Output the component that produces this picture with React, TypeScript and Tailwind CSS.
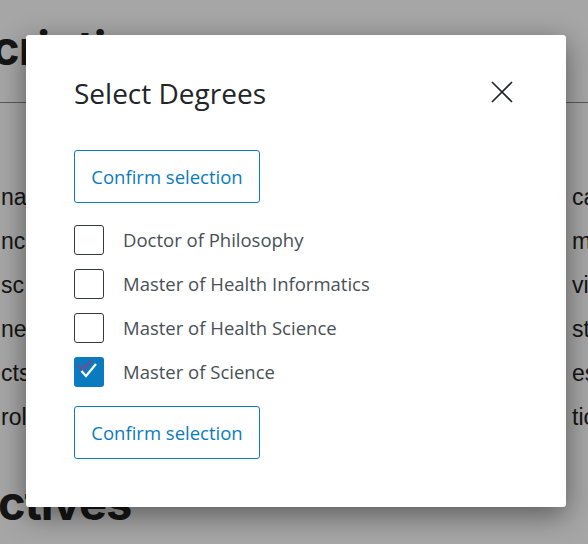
import { useState } from "react";

const degrees = [
  "Doctor of Philosophy",
  "Master of Health Informatics",
  "Master of Health Science",
  "Master of Science",
];

const bgLines = [
  ["nar", "ca"],
  ["nc", "m"],
  ["sc", "vi"],
  ["ner", "ste"],
  ["cts", "es"],
  ["rol", "tio"],
];

const CheckBox = ({ checked }: { checked: boolean }) => {
  if (!checked) {
    return <span className="block h-[30px] w-[30px] shrink-0 rounded-[3px] border border-[#343a40] bg-white" />;
  }
  return (
    <span className="flex h-[30px] w-[30px] shrink-0 items-center justify-center rounded-[3px] bg-[#0b7bc0]">
      <svg width="30" height="30" viewBox="0 0 30 30" fill="none">
        <path d="M4 8l4.5 4.5L18 3.5" stroke="#6a4f95" strokeWidth="2.6" />
        <path d="M7.5 14l4.5 5 10-12" stroke="#fff" strokeWidth="2.2" />
      </svg>
    </span>
  );
};

export default function App() {
  const [picked, setPicked] = useState<string[]>(["Master of Science"]);

  const toggle = (d: string) =>
    setPicked((p) => (p.includes(d) ? p.filter((x) => x !== d) : [...p, d]));

  const ConfirmButton = () => (
    <button className="h-[53px] w-[186px] rounded-[3px] border border-[#0b7bc0] bg-white text-[18.5px] text-[#0b7bc0]">
      Confirm selection
    </button>
  );

  return (
    <div className="relative h-[544px] w-[588px] overflow-hidden bg-white font-['Liberation_Sans',sans-serif] text-[#222]">
      {/* page behind the dialog */}
      <div className="whitespace-nowrap">
        <h2 className="ml-[-8px] pt-[18px] font-['Inter',sans-serif] text-[47px] font-bold leading-[60px] tracking-[-1px]">
          cription
        </h2>
        <div className="mt-[24px] border-t border-[#8a8a8a]" />
        <div className="mt-[72px] flex flex-col text-[23px] leading-[44px]">
          {bgLines.map(([l, r]) => (
            <div key={l} className="flex justify-between">
              <span className="ml-[1px]">{l}</span>
              <span className="mr-[-10px] w-[26px]">{r}</span>
            </div>
          ))}
        </div>
        <h2 className="mt-[34px] ml-[-2px] font-['Inter',sans-serif] text-[47px] font-bold leading-[60px] tracking-[-1px]">
          ctives
        </h2>
      </div>

      {/* dialog */}
      <div className="absolute inset-0 bg-black/35">
        <div className="ml-[26px] mt-[35px] h-[472px] w-[540px] rounded-[3px] bg-white px-[48px] pt-[36px] font-['Open_Sans',sans-serif] shadow-[0_8px_28px_rgba(0,0,0,0.45)]">
          <div className="flex items-start justify-between">
            <h1 className="text-[28px] leading-[44px] text-[#212529]">Select Degrees</h1>
            <button className="mr-[4px] mt-[9px] text-[#212529]">
              <svg width="24" height="24" viewBox="0 0 24 24" fill="none" stroke="currentColor" strokeWidth="1.6">
                <path d="M2 2l20 20M22 2L2 22" />
              </svg>
            </button>
          </div>

          <div className="mt-[35px]">
            <ConfirmButton />
          </div>

          <ul className="mt-[15px]">
            {degrees.map((d) => (
              <li key={d} className="flex h-[44px] cursor-pointer items-center gap-[19px]" onClick={() => toggle(d)}>
                <CheckBox checked={picked.includes(d)} />
                <span className="text-[18.5px] text-[#495057]">{d}</span>
              </li>
            ))}
          </ul>

          <div className="mt-[12px]">
            <ConfirmButton />
          </div>
        </div>
      </div>
    </div>
  );
}
